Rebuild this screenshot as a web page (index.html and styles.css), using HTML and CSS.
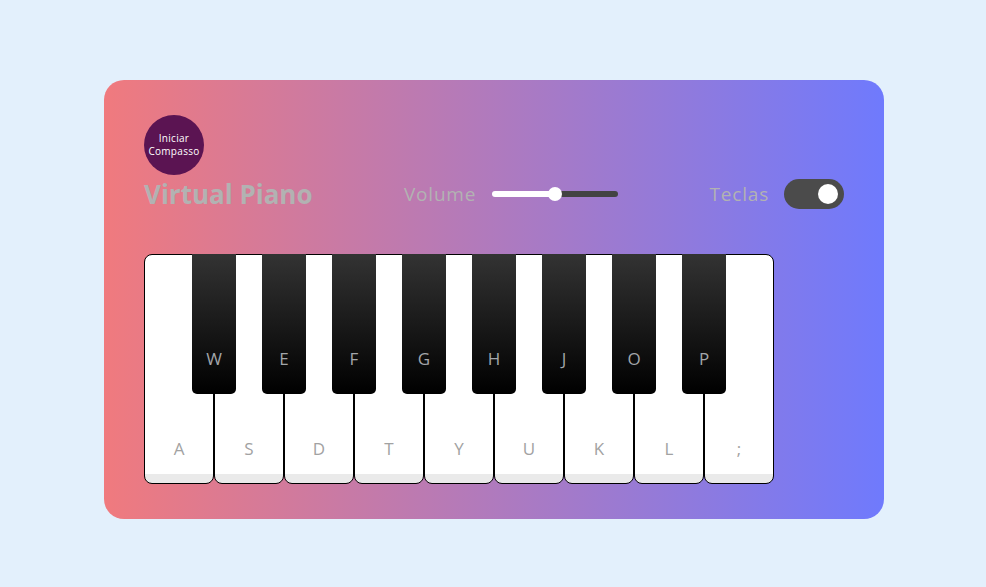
FILE: index.html
```html
<!DOCTYPE html>
<html lang="pt">
<head>
<meta charset="utf-8">
<title>Virtual Piano</title>
<link rel="stylesheet" href="styles.css">
</head>
<body>
<div class="wrapper">
  <button class="beat">Iniciar<br>Compasso</button>
  <header class="header">
    <h2 class="title">Virtual Piano</h2>
    <div class="column volume">
      <span class="label">Volume</span>
      <div class="slider">
        <div class="fill"></div>
        <div class="thumb"></div>
        <div class="rest"></div>
      </div>
    </div>
    <div class="column keys-toggle">
      <span class="label">Teclas</span>
      <div class="toggle"><div class="knob"></div></div>
    </div>
  </header>
  <ul class="piano-keys">
    <li class="key white"><span>A</span></li>
    <li class="key black"><span>W</span></li>
    <li class="key white"><span>S</span></li>
    <li class="key black"><span>E</span></li>
    <li class="key white"><span>D</span></li>
    <li class="key black"><span>F</span></li>
    <li class="key white"><span>T</span></li>
    <li class="key black"><span>G</span></li>
    <li class="key white"><span>Y</span></li>
    <li class="key black"><span>H</span></li>
    <li class="key white"><span>U</span></li>
    <li class="key black"><span>J</span></li>
    <li class="key white"><span>K</span></li>
    <li class="key black"><span>O</span></li>
    <li class="key white"><span>L</span></li>
    <li class="key black"><span>P</span></li>
    <li class="key white"><span>;</span></li>
  </ul>
</div>
</body>
</html>
```

FILE: styles.css
```css
* { margin: 0; padding: 0; box-sizing: border-box; }
body {
  width: 986px;
  height: 587px;
  background: #e3f0fc;
  font-family: "Open Sans", "Noto Sans", sans-serif;
  padding: 80px 0 0 104px;
}
.wrapper {
  width: 780px;
  height: 439px;
  border-radius: 20px;
  padding: 35px 40px;
  background: linear-gradient(to right, #f07a7e, #6f7afd);
  display: flex;
  flex-direction: column;
}
.beat {
  width: 60px;
  height: 60px;
  border-radius: 50%;
  border: none;
  background: #5b1452;
  color: #fff;
  font-family: "Open Sans", sans-serif;
  font-size: 10px;
  line-height: 13.5px;
  letter-spacing: 0.3px;
}
.header {
  display: flex;
  justify-content: space-between;
  align-items: center;
  height: 30px;
  margin-top: 4px;
}
.title {
  color: #b2b2b2;
  font-size: 26px;
  font-weight: 700;
  letter-spacing: 0;
}
.column { display: flex; align-items: center; }
.label {
  color: #b2b2b2;
  font-size: 19px;
  letter-spacing: 0.8px;
}
.volume .label { margin-right: 16px; }
.keys-toggle .label { margin-right: 15px; }
.slider {
  position: relative;
  width: 126px;
  height: 7px;
  display: flex;
  align-items: center;
}
.fill {
  width: 63px;
  height: 6px;
  background: #fff;
  border-radius: 3px 0 0 3px;
}
.rest {
  flex: 1;
  height: 6px;
  background: #434343;
  border-radius: 0 3px 3px 0;
}
.thumb {
  position: absolute;
  left: 56px;
  top: -4px;
  width: 14px;
  height: 14px;
  border-radius: 50%;
  background: #fff;
}
.toggle {
  width: 60px;
  height: 30px;
  border-radius: 30px;
  background: #4b4b4b;
  display: flex;
  align-items: center;
  justify-content: flex-end;
  padding-right: 6px;
}
.knob {
  width: 20px;
  height: 20px;
  border-radius: 50%;
  background: #fff;
}
.piano-keys {
  list-style: none;
  display: flex;
  margin-top: 45px;
}
.key {
  position: relative;
  display: flex;
  justify-content: center;
}
.white {
  width: 70px;
  height: 230px;
  border: 1px solid #000;
  border-radius: 8px;
  background: linear-gradient(#fff 96%, #eaeaea 96%);
}
.black {
  z-index: 2;
  width: 44px;
  height: 140px;
  margin: 0 -22px;
  border-radius: 0 0 5px 5px;
  background: linear-gradient(#333, #000);
}
.key span {
  position: absolute;
  bottom: 23px;
  color: #a2a2a2;
  font-size: 17px;
}
.black span {
  bottom: 24px;
  color: #a3a6aa;
}
```
